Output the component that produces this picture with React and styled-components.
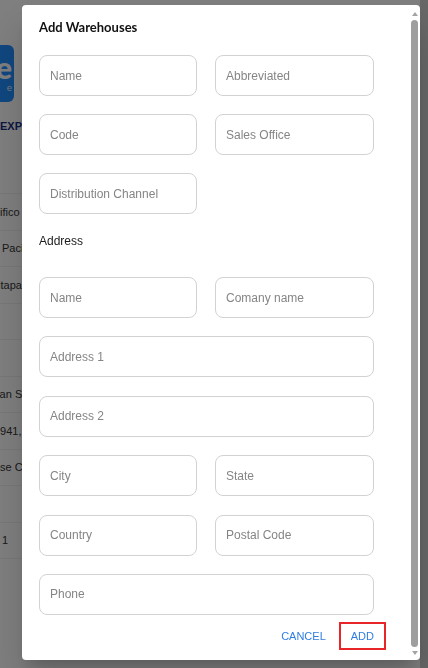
import styled, { createGlobalStyle } from "styled-components";

const GlobalStyle = createGlobalStyle`
  html, body {
    margin: 0;
    padding: 0;
    height: 100%;
    overflow: hidden;
    background: #ffffff;
  }
  * {
    box-sizing: border-box;
  }
`;

const Page = styled.div`
  display: flex;
  width: 428px;
  height: 668px;
  font-family: "Liberation Sans", Arial, sans-serif;
`;

const PageContent = styled.div`
  flex: 1;
  display: flex;
  flex-direction: column;
  padding-top: 45px;
  overflow: hidden;
`;

const PageScrollTrack = styled.div`
  width: 8px;
  background: #cfcfcf;
`;

const LogoCard = styled.div`
  width: 48px;
  height: 57px;
  margin-left: -34px;
  border-radius: 6px;
  background: #1f8fff;
  color: #ffffff;
  display: flex;
  flex-direction: column;
  align-items: flex-end;
  justify-content: center;
  padding-right: 2px;
  font-family: "Lato", sans-serif;
`;

const LogoBig = styled.span`
  font-size: 30px;
  font-weight: 900;
  line-height: 26px;
`;

const LogoSmall = styled.span`
  font-size: 10px;
  line-height: 14px;
  opacity: 0.85;
`;

const ExportLink = styled.div`
  margin-top: 18px;
  font-size: 11px;
  font-weight: 700;
  color: #1a2f8a;
  white-space: nowrap;
`;

const TableBody = styled.div`
  margin-top: 61px;
  display: flex;
  flex-direction: column;
  border-top: 1px solid #f0f0f0;
`;

const TableRow = styled.div`
  height: 36.5px;
  display: flex;
  align-items: center;
  border-bottom: 1px solid #f0f0f0;
  font-size: 11px;
  color: #333333;
  white-space: nowrap;
`;

const CellText = styled.span`
  margin-left: ${(p) => p.$shift || 0}px;
`;

const Overlay = styled.div`
  position: fixed;
  inset: 0;
  background: rgba(0, 0, 0, 0.5);
  display: flex;
  padding: 5px 8px 8px 22px;
`;

const Dialog = styled.div`
  position: relative;
  flex: 1;
  background: #ffffff;
  border-radius: 4px;
  overflow: hidden;
  box-shadow: 0 11px 15px -7px rgba(0, 0, 0, 0.2),
    0 24px 38px 3px rgba(0, 0, 0, 0.14);
`;

const ScrollRail = styled.div`
  position: absolute;
  top: 7px;
  bottom: 5px;
  right: 2px;
  width: 7px;
  display: flex;
  flex-direction: column;
  align-items: center;
`;

const ScrollArrow = styled.div`
  width: 0;
  height: 0;
  border-left: 3.5px solid transparent;
  border-right: 3.5px solid transparent;
  ${(p) =>
    p.$down
      ? "border-top: 4px solid #a3a3a3;"
      : "border-bottom: 4px solid #a3a3a3;"}
`;

const ScrollThumb = styled.div`
  flex: 1;
  width: 7px;
  margin: 4px 0;
  border-radius: 4px;
  background: #9e9e9e;
`;

const DialogBody = styled.div`
  padding: 14px 34px 15px 17px;
  display: flex;
  flex-direction: column;
`;

const Title = styled.h2`
  margin: 0 0 20px;
  font-family: "Lato", sans-serif;
  font-size: 13px;
  line-height: 16px;
  font-weight: 700;
  color: #111111;
`;

const FieldGrid = styled.div`
  width: 335px;
  display: grid;
  grid-template-columns: 158px 159px;
  column-gap: 18px;
  row-gap: ${(p) => p.$gap || 18}px;
`;

const Field = styled.input`
  grid-column: ${(p) => (p.$wide ? "1 / -1" : "auto")};
  height: 41px;
  width: 100%;
  padding: 0 10px;
  border: 1px solid #d2d2d2;
  border-radius: 8px;
  font-family: "Liberation Sans", Arial, sans-serif;
  font-size: 12px;
  color: #333333;
  background: #ffffff;
  outline: none;

  &::placeholder {
    color: #858585;
  }
`;

const SectionLabel = styled.div`
  margin: 19px 0 28px;
  font-family: "Liberation Sans", Arial, sans-serif;
  font-size: 12px;
  line-height: 16px;
  color: #1c1c1c;
`;

const Actions = styled.div`
  margin-top: 7px;
  display: flex;
  justify-content: flex-end;
  gap: 1px;
`;

const ActionButton = styled.button`
  height: 28px;
  padding: 0 ${(p) => (p.$highlight ? 10 : 12)}px;
  border: ${(p) => (p.$highlight ? "2px solid #e8262a" : "none")};
  background: transparent;
  font-family: "Liberation Sans", Arial, sans-serif;
  font-size: 11px;
  text-transform: uppercase;
  color: #2f7de1;
  cursor: pointer;
`;

const rows = [
  { text: "Pacifico", shift: -19 },
  { text: "Pacifico Sur", shift: 2 },
  { text: "Chitapa", shift: -16 },
  { text: "" },
  { text: "" },
  { text: "Juan St", shift: -12 },
  { text: "1941, Av", shift: -6 },
  { text: "Rose Ct", shift: -14 },
  { text: "" },
  { text: "1", shift: 2 },
];

function App() {
  return (
    <>
      <GlobalStyle />
      <Page>
        <PageContent>
          <LogoCard>
            <LogoBig>e</LogoBig>
            <LogoSmall>e</LogoSmall>
          </LogoCard>
          <ExportLink>EXPORT</ExportLink>
          <TableBody>
            {rows.map((row, i) => (
              <TableRow key={i}>
                <CellText $shift={row.shift}>{row.text}</CellText>
              </TableRow>
            ))}
          </TableBody>
        </PageContent>
        <PageScrollTrack />
      </Page>

      <Overlay>
        <Dialog>
          <DialogBody>
            <Title>Add Warehouses</Title>
            <FieldGrid>
              <Field placeholder="Name" />
              <Field placeholder="Abbreviated" />
              <Field placeholder="Code" />
              <Field placeholder="Sales Office" />
              <Field placeholder="Distribution Channel" />
            </FieldGrid>

            <SectionLabel>Address</SectionLabel>
            <FieldGrid $gap={18.4}>
              <Field placeholder="Name" />
              <Field placeholder="Comany name" />
              <Field $wide placeholder="Address 1" />
              <Field $wide placeholder="Address 2" />
              <Field placeholder="City" />
              <Field placeholder="State" />
              <Field placeholder="Country" />
              <Field placeholder="Postal Code" />
              <Field $wide placeholder="Phone" />
            </FieldGrid>

            <Actions>
              <ActionButton>Cancel</ActionButton>
              <ActionButton $highlight>Add</ActionButton>
            </Actions>
          </DialogBody>

          <ScrollRail>
            <ScrollArrow />
            <ScrollThumb />
            <ScrollArrow $down />
          </ScrollRail>
        </Dialog>
      </Overlay>
    </>
  );
}

export default App;
